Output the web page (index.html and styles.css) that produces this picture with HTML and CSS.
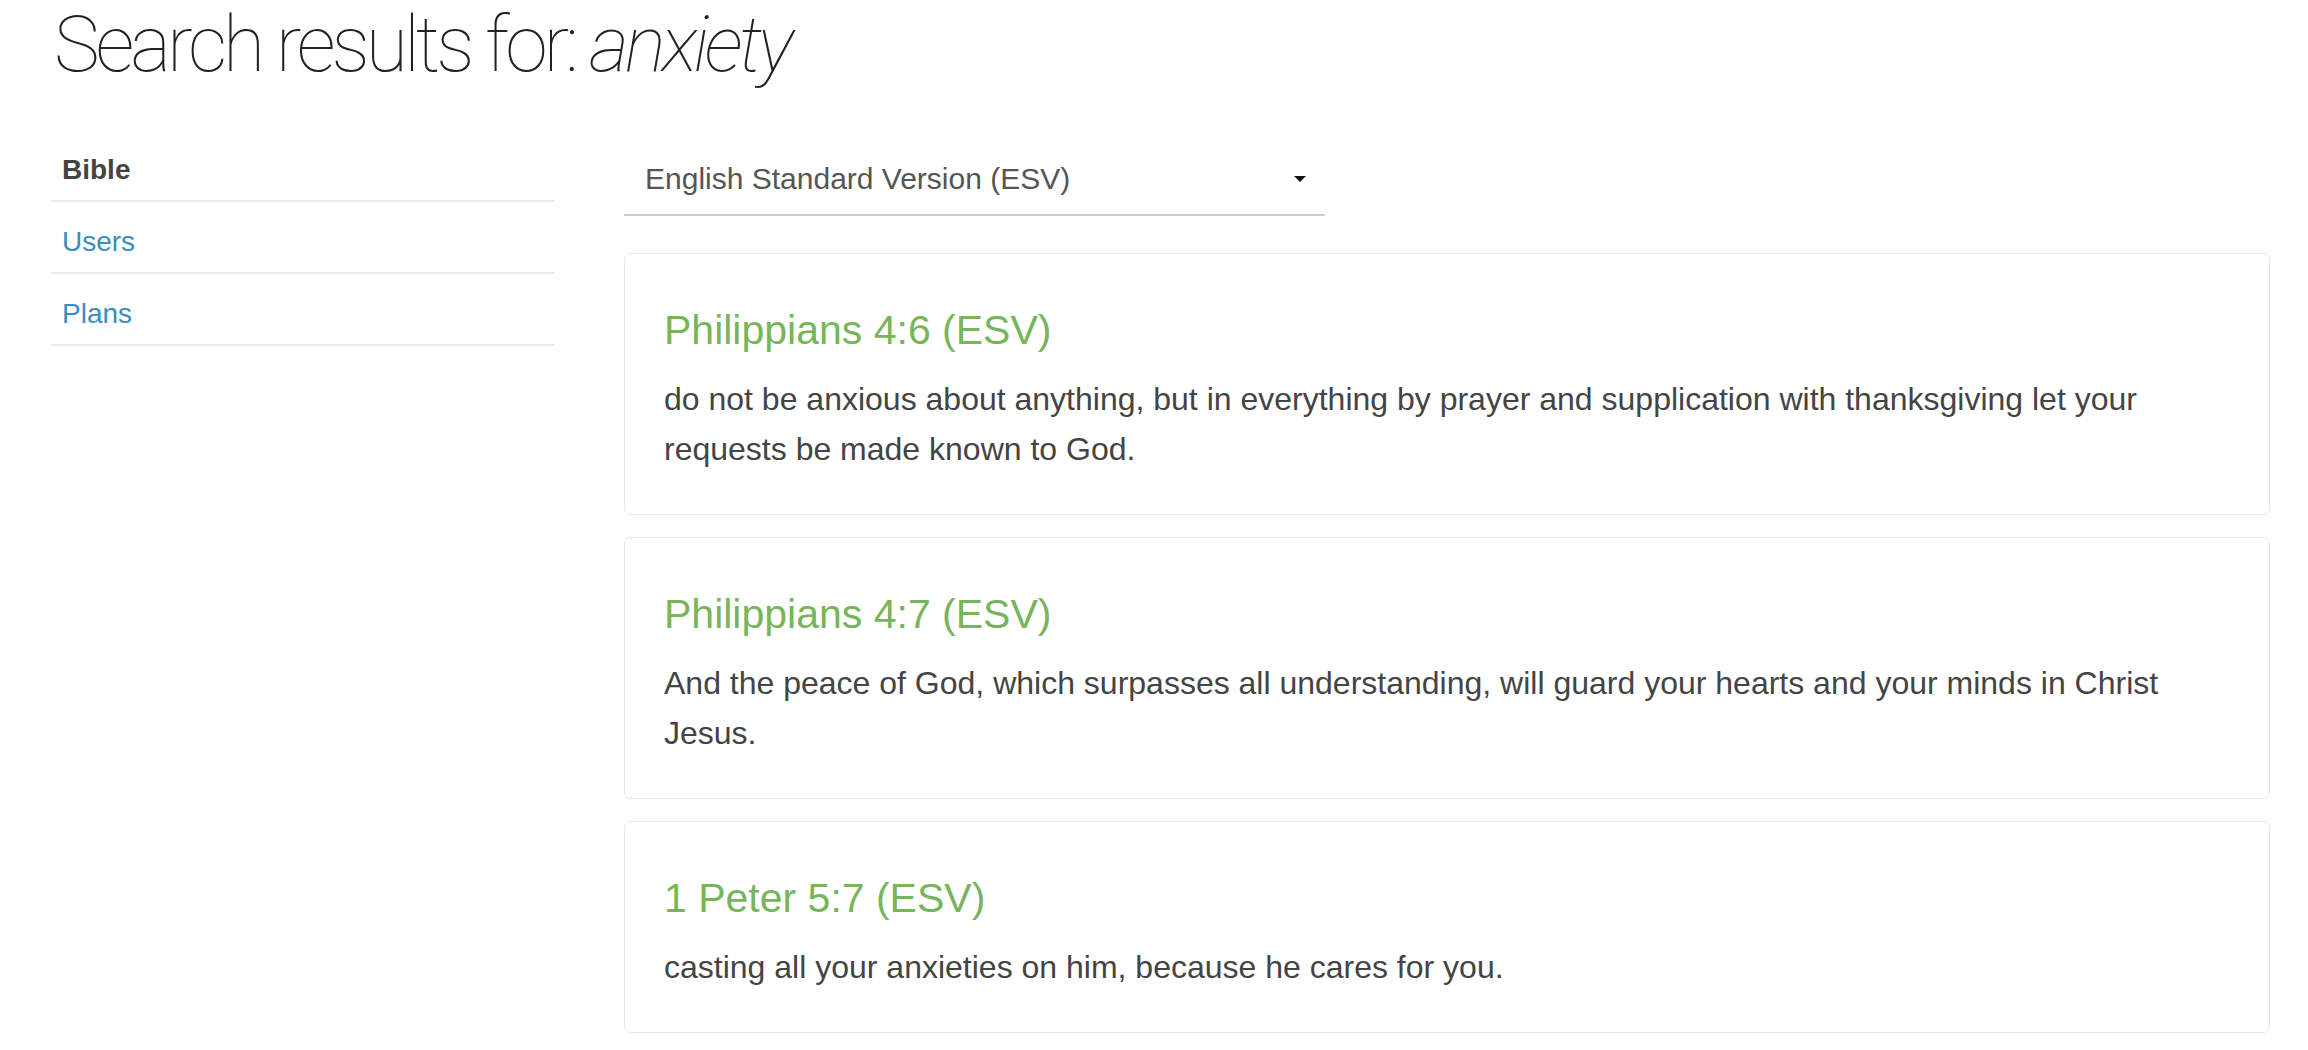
FILE: index.html
```html
<!DOCTYPE html>
<html lang="en">
<head>
<meta charset="utf-8">
<title>Search results for: anxiety</title>
<link rel="stylesheet" href="styles.css">
</head>
<body>
<div class="page">
  <h1 class="title">Search results for: <em>anxiety</em></h1>
  <div class="layout">
    <ul class="sidenav">
      <li class="sidenav-item active">Bible</li>
      <li class="sidenav-item"><a href="#">Users</a></li>
      <li class="sidenav-item"><a href="#">Plans</a></li>
    </ul>
    <div class="results">
      <div class="version-select">
        <span class="version-label">English Standard Version (ESV)</span>
        <span class="caret"></span>
      </div>
      <div class="card">
        <h3 class="card-title">Philippians 4:6 (ESV)</h3>
        <p class="card-text">do not be anxious about anything, but in everything by prayer and supplication with thanksgiving let your requests be made known to God.</p>
      </div>
      <div class="card">
        <h3 class="card-title">Philippians 4:7 (ESV)</h3>
        <p class="card-text">And the peace of God, which surpasses all understanding, will guard your hearts and your minds in Christ Jesus.</p>
      </div>
      <div class="card">
        <h3 class="card-title">1 Peter 5:7 (ESV)</h3>
        <p class="card-text">casting all your anxieties on him, because he cares for you.</p>
      </div>
    </div>
  </div>
</div>
</body>
</html>
```

FILE: styles.css
```css
html, body {
  margin: 0;
  padding: 0;
  background: #ffffff;
}

body {
  font-family: "Liberation Sans", Arial, sans-serif;
  color: #444444;
}

.page {
  padding: 0 38px 0 51px;
}

.title {
  margin: 0 0 38px 3px;
  font-family: Roboto, "Liberation Sans", sans-serif;
  font-weight: 100;
  font-size: 77px;
  line-height: 90px;
  letter-spacing: -4px;
  color: #222222;
}

.title em {
  font-style: italic;
}

.layout {
  display: grid;
  grid-template-columns: 504px 1fr;
  column-gap: 69px;
  align-items: start;
}

.sidenav {
  list-style: none;
  margin: 2px 0 0 0;
  padding: 0;
}

.sidenav-item {
  height: 56px;
  line-height: 56px;
  padding: 12px 0 2px 11px;
  font-size: 28px;
  border-bottom: 2px solid #ebebeb;
}

.sidenav-item.active {
  font-weight: bold;
  color: #444444;
}

.sidenav-item a {
  color: #3a8dbf;
  text-decoration: none;
}

.results {
  display: flex;
  flex-direction: column;
}

.version-select {
  width: 659px;
  height: 70px;
  margin-top: 16px;
  margin-bottom: 37px;
  padding: 0 21px;
  display: flex;
  align-items: center;
  justify-content: space-between;
  border-bottom: 2px solid #cccccc;
  font-size: 30px;
  color: #555555;
}

.caret {
  width: 0;
  height: 0;
  border-left: 6px solid transparent;
  border-right: 6px solid transparent;
  border-top: 6px solid #111111;
  margin-right: -2px;
}

.card {
  border: 1px solid #e6e6e6;
  border-radius: 7px;
  padding: 39px 39px 40px 39px;
  margin-bottom: 22px;
}

.card-title {
  margin: 15px 0 22px 0;
  font-size: 41px;
  line-height: 44px;
  font-weight: normal;
  color: #77b55c;
}

.card-text {
  margin: 0;
  font-size: 32px;
  line-height: 50px;
  color: #444444;
}
```
